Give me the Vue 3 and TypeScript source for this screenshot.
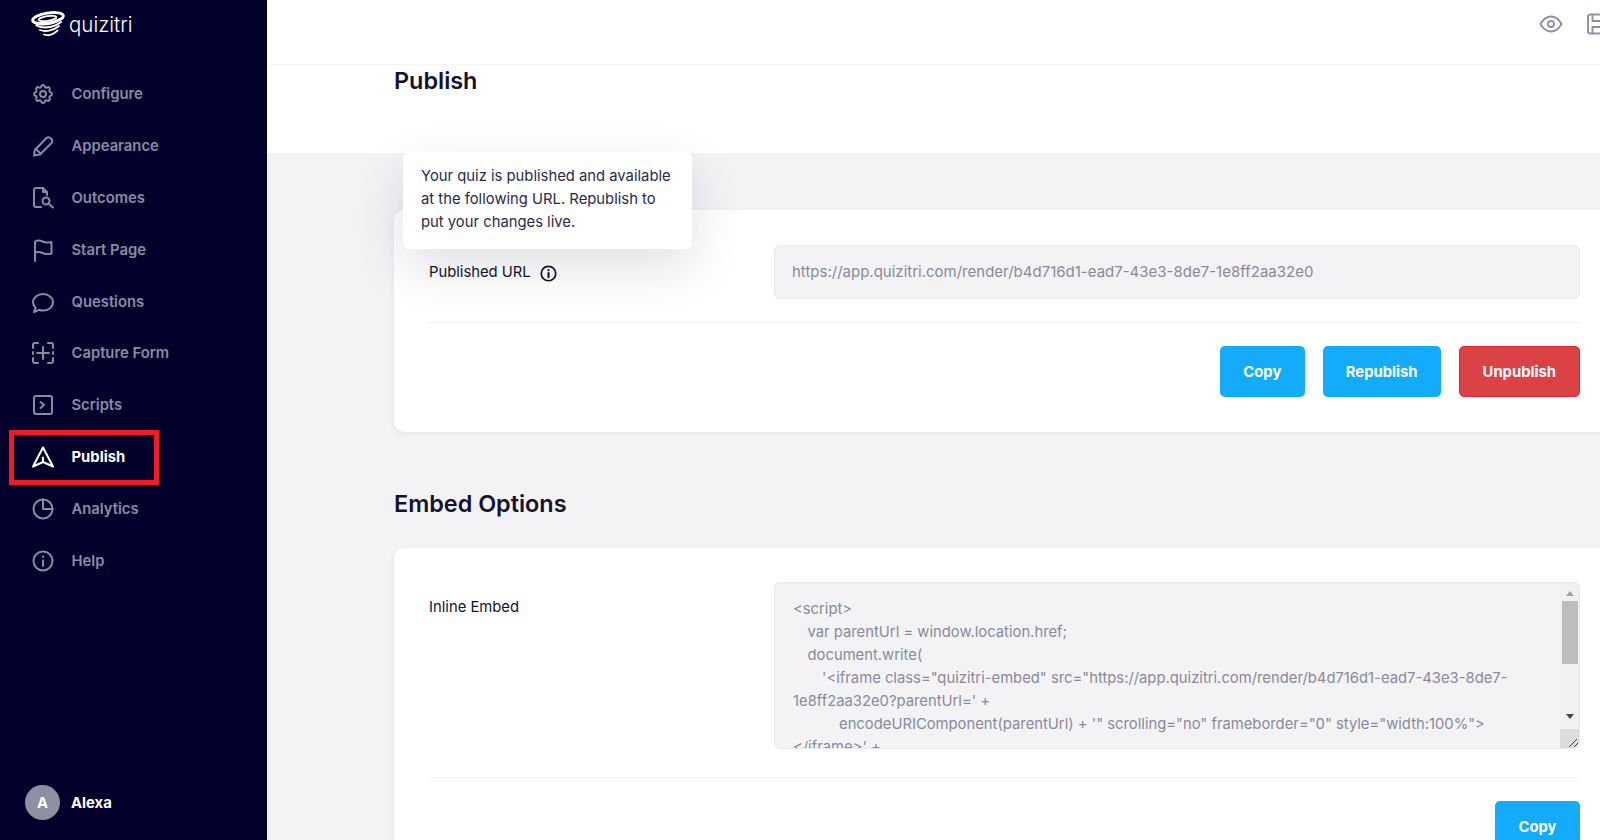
<script setup lang="ts">
interface NavItem { label: string; paths: string[]; active?: boolean }
const gear = 'M10.3 4.3c.4-1.8 3-1.8 3.4 0a1.7 1.7 0 0 0 2.5 1.1c1.6-1 3.3.8 2.4 2.4a1.7 1.7 0 0 0 1.1 2.5c1.7.4 1.7 3 0 3.4a1.7 1.7 0 0 0-1.1 2.5c1 1.6-.8 3.3-2.4 2.4a1.7 1.7 0 0 0-2.5 1.1c-.4 1.7-3 1.7-3.4 0a1.7 1.7 0 0 0-2.5-1.1c-1.6 1-3.3-.8-2.4-2.4a1.7 1.7 0 0 0-1.1-2.5c-1.7-.4-1.7-3 0-3.4a1.7 1.7 0 0 0 1.1-2.5c-1-1.6.8-3.3 2.4-2.4 1 .6 2.3.1 2.5-1.1z'
const nav: NavItem[] = [
  { label: 'Configure', paths: [gear, 'M15 12a3 3 0 1 1-6 0 3 3 0 0 1 6 0z'] },
  { label: 'Appearance', paths: ['M3 21.5l.8-5.5L15.5 4a3.6 3.6 0 0 1 5 5L9 20.5z', 'M5 15l4.5 4.5'] },
  { label: 'Outcomes', paths: ['M10 21H5a2 2 0 0 1-2-2V4a2 2 0 0 1 2-2h7l4 4v3', 'M12 2v4h4', 'M18.5 15a3.5 3.5 0 1 1-7 0 3.5 3.5 0 0 1 7 0z', 'M18 18l4 3.5'] },
  { label: 'Start Page', paths: ['M4 23V3.5c2.5-1.5 5-1.2 7.500 0s5 1.500 9 .5v11.500c-4 1-6.500.7-9-.5s-5-1.500-7.500 0'] },
  { label: 'Questions', paths: ['M3 22l1.700-4.200C3 16.300 2 14.400 2 12.300 2 7.700 6.500 4 12 4s10 3.700 10 8.300-4.500 8.300-10 8.300c-1.500 0-3-.3-4.300-.8C6 21 4.500 21.800 3 22z'] },
  { label: 'Capture Form', paths: ['M2 7V4a2 2 0 0 1 2-2h3', 'M17 2h3a2 2 0 0 1 2 2v3', 'M22 17v3a2 2 0 0 1-2 2h-3', 'M7 22H4a2 2 0 0 1-2-2v-3', 'M12 6v12', 'M6 12h12', 'M2 11v2', 'M22 11v2'] },
  { label: 'Scripts', paths: ['M5 3h14a2 2 0 0 1 2 2v14a2 2 0 0 1-2 2H5a2 2 0 0 1-2-2V5a2 2 0 0 1 2-2z', 'M9.500 9l3.500 3-3.500 3'] },
  { label: 'Publish', active: true, paths: ['M12 2.500L22 21.500l-10-4.500-10 4.500z', 'M12 12.500V17'] },
  { label: 'Analytics', paths: ['M21.500 12a9.500 9.500 0 1 1-19 0 9.500 9.500 0 0 1 19 0z', 'M12 2.500V12h9.500'] },
  { label: 'Help', paths: ['M21.500 12a9.500 9.500 0 1 1-19 0 9.500 9.500 0 0 1 19 0z', 'M12 11.500V17', 'M12 7.500v.5'] },
]
const codeLines: { text: string; indent: number }[] = [
  { text: '<script>', indent: 0 },
  { text: 'var parentUrl = window.location.href;', indent: 14.5 },
  { text: 'document.write(', indent: 14.5 },
  { text: '\'<iframe class="quizitri-embed" src="https://app.quizitri.com/render/b4d716d1-ead7-43e3-8de7-1e8ff2aa32e0?parentUrl=\' +', indent: 29 },
  { text: 'encodeURIComponent(parentUrl) + \'" scrolling="no" frameborder="0" style="width:100%"></iframe>\' +', indent: 46 },
]
</script>

<template>
  <div class="app">
    <aside class="sidebar">
      <div class="brand">
        <svg class="logo" viewBox="0 0 34 27" fill="none" stroke="#fff" stroke-linecap="round">
          <ellipse cx="17" cy="7" rx="15.500" ry="5" transform="rotate(-9 17 7)" stroke-width="2.800" />
          <ellipse cx="16.500" cy="7.500" rx="9" ry="2.300" transform="rotate(-9 16.500 7.500)" stroke-width="1.800" />
          <path d="M2 10c3 4.500 17 5.500 29.500-3" stroke-width="2.400" />
          <path d="M5.500 14.500c5 3 16 3 24.500-3.500" stroke-width="2" />
          <path d="M9 19c5 2 13 1 19-4" stroke-width="1.800" />
          <path d="M13 23.500c4 1.500 9.500 0 13.500-4" stroke-width="1.800" />
        </svg>
        <span class="brand-name">quizitri</span>
      </div>
      <nav class="nav">
        <a v-for="item in nav" :key="item.label" class="nav-item" :class="{ active: item.active }">
          <svg class="nav-icon" viewBox="0 0 24 24" fill="none" stroke="currentColor" stroke-width="2" stroke-linecap="round" stroke-linejoin="round">
            <path v-for="d in item.paths" :key="d" :d="d" />
          </svg>
          <span>{{ item.label }}</span>
          <span v-if="item.active" class="highlight"></span>
        </a>
      </nav>
      <div class="user">
        <span class="avatar">A</span>
        <span>Alexa</span>
      </div>
    </aside>

    <main class="main">
      <header class="topbar">
        <svg class="top-icon" viewBox="0 0 24 24" fill="none" stroke="#8f8fa3" stroke-width="1.900">
          <path d="M1.500 12C4 7.500 7.500 4.500 12 4.500s8 3 10.500 7.500c-2.500 4.500-6 7.500-10.500 7.500S4 16.500 1.500 12z" />
          <circle cx="12" cy="12" r="3" />
        </svg>
        <svg class="top-icon" viewBox="0 0 24 24" fill="none" stroke="#8f8fa3" stroke-width="1.900">
          <path d="M4 2.500h16a2 2 0 0 1 2 2v15a2 2 0 0 1-2 2H4a2 2 0 0 1-2-2v-15a2 2 0 0 1 2-2z" />
          <path d="M6.500 2.500V9h11V2.500" />
          <path d="M6.500 21.500V15h11v6.500" />
        </svg>
      </header>
      <div class="title-band">
        <h1 class="title">Publish</h1>
      </div>
      <div class="content">
        <section class="card first">
          <div class="tooltip">Your quiz is published and available at the following URL. Republish to put your changes live.</div>
          <div class="row url-row">
            <div class="label">
              Published URL
              <svg class="info" viewBox="0 0 16 16" fill="none" stroke="#14122f" stroke-width="1.600" stroke-linecap="round">
                <circle cx="8" cy="8" r="6.800" />
                <path d="M8 7.500V11.500" stroke-width="2" />
                <path d="M8 4.700v.2" stroke-width="2" />
              </svg>
            </div>
            <div class="field">https://app.quizitri.com/render/b4d716d1-ead7-43e3-8de7-1e8ff2aa32e0</div>
          </div>
          <div class="actions">
            <button class="btn copy">Copy</button>
            <button class="btn republish">Republish</button>
            <button class="btn danger">Unpublish</button>
          </div>
        </section>

        <h2 class="section-title">Embed Options</h2>

        <section class="card second">
          <div class="row embed-row">
            <div class="label embed-label">Inline Embed</div>
            <div class="code">
              <div class="code-text">
                <div v-for="line in codeLines" :key="line.text" :style="{ textIndent: line.indent + 'px' }">{{ line.text }}</div>
              </div>
              <div class="scrollbar">
                <span class="arrow up"></span>
                <span class="thumb"></span>
                <span class="arrow down"></span>
                <span class="corner">
                  <svg viewBox="0 0 12 12" fill="none" stroke="#444" stroke-width="1"><path d="M2 11l8-8M7 11l4-4" /></svg>
                </span>
              </div>
            </div>
          </div>
          <div class="actions">
            <button class="btn copy">Copy</button>
          </div>
        </section>
      </div>
    </main>
  </div>
</template>

<style>
html, body { margin: 0; height: 100%; overflow: hidden; }
</style>

<style scoped>
.app {
  display: flex;
  width: 1600px;
  height: 840px;
  overflow: hidden;
  font-family: Inter, "Liberation Sans", sans-serif;
  color: #14122f;
  background: #f3f3f6;
}
.sidebar {
  flex: 0 0 267px;
  display: flex;
  flex-direction: column;
  background: #03012c;
  color: #8a8aa3;
}
.brand {
  display: flex;
  align-items: center;
  gap: 4px;
  height: 49px;
  padding: 0 0 0 31px;
}
.logo { width: 34px; height: 27px; }
.brand-name {
  color: #fff;
  font-size: 20.500px;
  font-weight: 300;
  line-height: 26px;
}
.nav {
  display: flex;
  flex-direction: column;
  padding-top: 19px;
}
.nav-item {
  position: relative;
  display: flex;
  align-items: center;
  gap: 16.500px;
  height: 51.900px;
  padding-left: 31px;
  font-size: 14.800px;
  font-weight: 600;
}
.nav-item.active { color: #fff; font-weight: 700; }
.nav-icon { width: 24px; height: 24px; flex: none; }
.highlight {
  position: absolute;
  left: 9px;
  top: -1px;
  width: 140px;
  height: 45px;
  border: 5px solid #ee1c25;
}
.user {
  display: flex;
  align-items: center;
  gap: 11px;
  margin-top: auto;
  padding: 0 0 20px 25px;
  color: #fff;
  font-size: 14.800px;
  font-weight: 700;
}
.avatar {
  display: flex;
  align-items: center;
  justify-content: center;
  width: 35px;
  height: 35px;
  border-radius: 50%;
  background: #8f8fa3;
}
.main {
  flex: 0 0 1333px;
  display: flex;
  flex-direction: column;
  min-width: 0;
}
.topbar {
  flex: none;
  display: flex;
  justify-content: flex-end;
  align-items: center;
  gap: 23px;
  height: 65px;
  padding-bottom: 16px;
  box-sizing: border-box;
  margin-right: -10px;
  background: #fff;
  border-bottom: 1px solid #f6f6f8;
}
.top-icon { width: 24px; height: 24px; flex: none; }
.title-band {
  flex: none;
  height: 88px;
  padding-left: 127px;
  background: #fff;
}
.title {
  margin: 0;
  font-size: 23.400px;
  font-weight: 600;
  line-height: 31px;
}
.content {
  flex: 1;
  padding: 57px 0 0 127px;
}
.card {
  position: relative;
  box-sizing: border-box;
  width: 1240px;
  padding: 35px 0 0 34px;
  background: #fff;
  border-radius: 10px 0 0 10px;
  box-shadow: 0 2px 6px rgba(20, 18, 47, 0.06);
}
.card.first { height: 222px; }
.card.second { height: 320px; padding-top: 34px; }
.tooltip {
  position: absolute;
  left: 9px;
  top: -58px;
  box-sizing: border-box;
  width: 289px;
  height: 97px;
  padding: 13px 18px;
  background: #fff;
  border-radius: 6px;
  box-shadow: 0 18px 50px rgba(20, 18, 47, 0.13);
  font-size: 14.800px;
  line-height: 23px;
  color: #2b2a4a;
}
.row {
  display: grid;
  grid-template-columns: 346px 806px;
  border-bottom: 1px solid #f3f3f6;
  width: 1152px;
}
.url-row { padding-bottom: 23px; }
.embed-row { padding-bottom: 28px; }
.label {
  display: flex;
  align-items: center;
  gap: 9px;
  padding-left: 1px;
  font-size: 14.800px;
  color: #14122f;
}
.embed-label { align-items: flex-start; padding-top: 15px; line-height: 20px; }
.info { width: 17px; height: 17px; margin-top: 3px; }
.field {
  box-sizing: border-box;
  height: 54px;
  padding: 0 17px;
  background: #f3f3f6;
  border: 1px solid #e8e8ed;
  border-radius: 6px;
  color: #8a8a9a;
  font-size: 15px;
  line-height: 52px;
}
.actions {
  display: flex;
  justify-content: flex-end;
  gap: 18px;
  width: 1152px;
  margin-top: 23px;
}
.btn {
  height: 51px;
  padding: 0 23px;
  border: 0;
  border-radius: 5px;
  color: #fff;
  font: 700 14.800px Inter, "Liberation Sans", sans-serif;
}
.copy { min-width: 85px; }
.copy, .republish { background: #15abfb; }
.danger { background: #db4245; border: 1px solid #d92a2d; }
.section-title {
  margin: 0;
  height: 116px;
  box-sizing: border-box;
  padding-top: 57px;
  font-size: 23.400px;
  font-weight: 600;
  line-height: 30px;
}
.code {
  position: relative;
  box-sizing: border-box;
  height: 167px;
  overflow: hidden;
  background: #f3f3f6;
  border: 1px solid #e8e8ed;
  border-radius: 6px;
}
.code-text {
  padding: 15px 38px 0 18px;
  overflow-wrap: anywhere;
  font-size: 14.800px;
  line-height: 23px;
  color: #8a8a9a;
}
.scrollbar {
  position: absolute;
  right: 0;
  top: 0;
  bottom: 0;
  width: 19px;
  display: flex;
  flex-direction: column;
  align-items: center;
  background: #f1f1f3;
}
.arrow {
  width: 0;
  height: 0;
  border-left: 4px solid transparent;
  border-right: 4px solid transparent;
}
.arrow.up { margin-top: 8px; border-bottom: 5px solid #a3a3a3; }
.thumb { width: 16px; height: 63px; margin-top: 5px; background: #bdbdbd; }
.arrow.down { margin-top: 50px; border-top: 5px solid #444; }
.corner {
  position: absolute;
  bottom: 0;
  right: 0;
  width: 19px;
  height: 19px;
  background: #dcdcdc;
}
.corner svg { display: block; width: 12px; height: 12px; margin: 7px 0 0 7px; }
</style>
